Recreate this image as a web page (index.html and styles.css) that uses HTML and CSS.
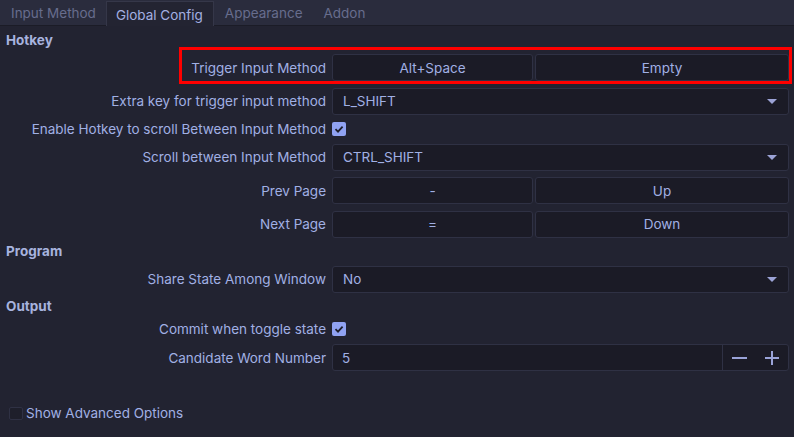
FILE: index.html
```html
<!DOCTYPE html>
<html>
<head>
<meta charset="utf-8">
<link rel="stylesheet" href="styles.css">
</head>
<body>
<div class="tabs">
  <div class="tab">Input Method</div>
  <div class="tab active">Global Config</div>
  <div class="tab">Appearance</div>
  <div class="tab">Addon</div>
</div>
<div class="content">
  <div class="section">Hotkey</div>
  <div class="row highlight">
    <div class="label">Trigger Input Method</div>
    <div class="keys"><div class="btn">Alt+Space</div><div class="btn">Empty</div></div>
  </div>
  <div class="row">
    <div class="label">Extra key for trigger input method</div>
    <div class="combo"><span>L_SHIFT</span><span class="arrow"></span></div>
  </div>
  <div class="row check-row">
    <div class="label">Enable Hotkey to scroll Between Input Method</div>
    <div><span class="checkbox checked"><svg viewBox="0 0 14 14" width="14" height="14"><path d="M3.5 7.2 L6 9.6 L10.6 4.6" fill="none" stroke="#1d1e2a" stroke-width="1.8"/></svg></span></div>
  </div>
  <div class="row">
    <div class="label">Scroll between Input Method</div>
    <div class="combo"><span>CTRL_SHIFT</span><span class="arrow"></span></div>
  </div>
  <div class="row">
    <div class="label">Prev Page</div>
    <div class="keys"><div class="btn">-</div><div class="btn">Up</div></div>
  </div>
  <div class="row">
    <div class="label">Next Page</div>
    <div class="keys"><div class="btn">=</div><div class="btn">Down</div></div>
  </div>
  <div class="section">Program</div>
  <div class="row">
    <div class="label">Share State Among Window</div>
    <div class="combo"><span>No</span><span class="arrow"></span></div>
  </div>
  <div class="section">Output</div>
  <div class="row check-row tall">
    <div class="label">Commit when toggle state</div>
    <div><span class="checkbox checked"><svg viewBox="0 0 14 14" width="14" height="14"><path d="M3.5 7.2 L6 9.6 L10.6 4.6" fill="none" stroke="#1d1e2a" stroke-width="1.8"/></svg></span></div>
  </div>
  <div class="row">
    <div class="label">Candidate Word Number</div>
    <div class="spin">
      <span class="spin-value">5</span>
      <span class="spin-btns">
        <svg width="16" height="16" viewBox="0 0 16 16"><path d="M1 8 H16" stroke="#9aa3d8" stroke-width="2"/></svg>
        <svg width="16" height="16" viewBox="0 0 16 16"><path d="M1 8 H15 M8 1 V15" stroke="#9aa3d8" stroke-width="2"/></svg>
      </span>
    </div>
  </div>
</div>
<div class="advanced">
  <span class="checkbox"></span>
  <span>Show Advanced Options</span>
</div>
</body>
</html>
```

FILE: styles.css
```css
* { box-sizing: border-box; }
html, body {
  margin: 0;
  padding: 0;
  background: #222331;
  color: #a1b0e4;
  font-family: Inter, "Noto Sans", sans-serif;
  font-size: 13.5px;
  width: 794px;
  height: 437px;
  overflow: hidden;
}
.tabs {
  display: flex;
  align-items: flex-end;
  height: 26px;
  background: #2a2c3d;
  border-bottom: 1px solid #1b1c27;
}
.tab {
  height: 25px;
  line-height: 27px;
  padding: 0 10px 0 11px;
  color: #676d8d;
}
.tab.active {
  height: 25px;
  margin-bottom: -1px;
  line-height: 26px;
  background: #232432;
  color: #a3b0e2;
  border: 1px solid #353749;
  border-bottom: none;
  padding: 0 10px 0 9px;
}
.content {
  display: flex;
  flex-direction: column;
  gap: 6.5px;
  padding: 6.5px 5px 0 0;
}
.section {
  height: 15px;
  line-height: 15px;
  padding-left: 6px;
  font-weight: 700;
  color: #a7b3df;
}
.row {
  display: grid;
  grid-template-columns: 326px 1fr;
  column-gap: 6px;
  align-items: center;
  height: 27px;
}
.row.check-row { height: 16px; }
.row.check-row.tall { height: 17px; }
.row.highlight { position: relative; }
.row.highlight::after {
  content: "";
  position: absolute;
  left: 179px;
  right: -3px;
  top: -7px;
  bottom: -3px;
  border: 3px solid #ff0000;
  pointer-events: none;
}
.label {
  text-align: right;
  white-space: nowrap;
}
.keys {
  display: grid;
  grid-template-columns: 201px 1fr;
  gap: 2px;
  height: 27px;
}
.btn, .combo, .spin {
  height: 27px;
  background: #1b1b26;
  border: 1px solid #2f3144;
  border-radius: 3px;
}
.btn {
  display: flex;
  align-items: center;
  justify-content: center;
}
.combo {
  display: flex;
  align-items: center;
  justify-content: space-between;
  padding: 0 11px 0 10px;
}
.arrow {
  width: 0;
  height: 0;
  border-left: 5px solid transparent;
  border-right: 5px solid transparent;
  border-top: 5px solid #9ca3d6;
}
.checkbox {
  display: inline-block;
  width: 14px;
  height: 14px;
  border-radius: 2px;
  vertical-align: middle;
  background: #1e1f2b;
  border: 1px solid #2f3144;
}
.checkbox.checked {
  background: #90a2f2;
  border: none;
}
.checkbox svg { display: block; }
.row.check-row > div:last-child { display: flex; align-items: center; }
.spin {
  display: flex;
  align-items: stretch;
}
.spin-value {
  flex: 1;
  display: flex;
  align-items: center;
  padding-left: 9px;
}
.spin-btns {
  width: 66px;
  border-left: 1px solid #2f3144;
  display: flex;
  align-items: center;
  justify-content: space-between;
  padding: 0 8px 0 8px;
}
.spin-btns svg { display: block; }
.advanced {
  display: flex;
  align-items: center;
  gap: 3px;
  padding-left: 9px;
  margin-top: 34px;
}
.advanced .checkbox { width: 14px; height: 13px; }
```
